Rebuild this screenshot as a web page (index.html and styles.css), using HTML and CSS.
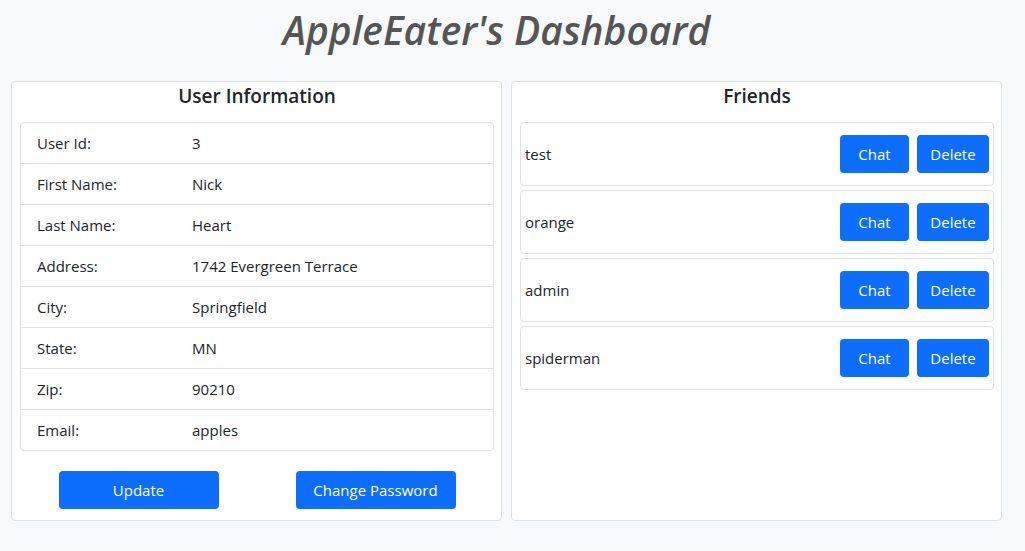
FILE: index.html
```html
<!DOCTYPE html>
<html>
<head>
<meta charset="utf-8">
<link rel="stylesheet" href="styles.css">
</head>
<body>
<h1 class="title">AppleEater's Dashboard</h1>
<main class="grid">
  <section class="card">
    <h5 class="card-title">User Information</h5>
    <div class="list">
      <div class="row"><span class="label">User Id:</span><span class="value">3</span></div>
      <div class="row"><span class="label">First Name:</span><span class="value">Nick</span></div>
      <div class="row"><span class="label">Last Name:</span><span class="value">Heart</span></div>
      <div class="row"><span class="label">Address:</span><span class="value">1742 Evergreen Terrace</span></div>
      <div class="row"><span class="label">City:</span><span class="value">Springfield</span></div>
      <div class="row"><span class="label">State:</span><span class="value">MN</span></div>
      <div class="row"><span class="label">Zip:</span><span class="value">90210</span></div>
      <div class="row"><span class="label">Email:</span><span class="value">apples</span></div>
    </div>
    <div class="actions">
      <button class="btn wide">Update</button>
      <button class="btn wide">Change Password</button>
    </div>
  </section>
  <section class="card">
    <h5 class="card-title">Friends</h5>
    <div class="friends">
      <div class="friend"><span class="name">test</span><div class="fbtns"><button class="btn chat">Chat</button><button class="btn del">Delete</button></div></div>
      <div class="friend"><span class="name">orange</span><div class="fbtns"><button class="btn chat">Chat</button><button class="btn del">Delete</button></div></div>
      <div class="friend"><span class="name">admin</span><div class="fbtns"><button class="btn chat">Chat</button><button class="btn del">Delete</button></div></div>
      <div class="friend"><span class="name">spiderman</span><div class="fbtns"><button class="btn chat">Chat</button><button class="btn del">Delete</button></div></div>
    </div>
  </section>
</main>
</body>
</html>
```
FILE: styles.css
```css
* { box-sizing: border-box; }
html, body { margin: 0; padding: 0; }
body {
  background: #f8f9fa;
  font-family: "Open Sans", "Noto Sans", sans-serif;
  font-size: 15px;
  color: #212529;
  width: 1025px;
  height: 551px;
  overflow: hidden;
}
.title {
  margin: 0 0 0 11px;
  padding: 4px 20px 0 0;
  height: 81px;
  width: 991px;
  text-align: center;
  font-style: italic;
  font-weight: 600;
  font-size: 39px;
  line-height: 52px;
  color: #555555;
}
.grid {
  display: grid;
  grid-template-columns: 491px 491px;
  gap: 9px;
  margin-left: 11px;
}
.card {
  background: #fff;
  border: 1px solid #dfe2e5;
  border-radius: 4px;
  height: 440px;
  padding: 0 7px 0 8px;
}
.card-title {
  margin: 0;
  height: 40px;
  line-height: 28px;
  text-align: center;
  font-size: 19px;
  font-weight: 600;
  color: #212529;
}
.list {
  border: 1px solid #dfe2e5;
  border-radius: 4px;
}
.row {
  display: flex;
  align-items: center;
  height: 41px;
  padding: 0 16px;
  border-top: 1px solid #dfe2e5;
}
.row:first-child { border-top: none; height: 40px; }
.label { width: 155px; }
.actions {
  display: grid;
  grid-template-columns: 1fr 1fr;
  justify-items: center;
  padding-top: 20px;
}
.btn {
  font-family: inherit;
  font-size: 15px;
  color: #fff;
  background: #0d6efd;
  border: none;
  border-radius: 4px;
  height: 38px;
  cursor: pointer;
}
.btn.wide { width: 160px; }
.friends {
  display: flex;
  flex-direction: column;
  gap: 4px;
}
.friend {
  display: flex;
  align-items: center;
  justify-content: space-between;
  border: 1px solid #dfe2e5;
  border-radius: 4px;
  padding: 12px 4px;
}
.fbtns { display: flex; gap: 8px; }
.btn.chat { width: 69px; }
.btn.del { width: 72px; }
```
